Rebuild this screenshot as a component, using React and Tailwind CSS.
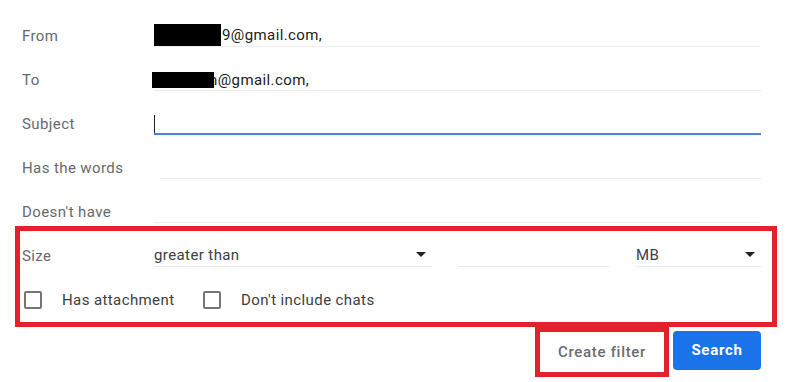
export default function App() {
  return (
    <div className="h-[382px] w-[788px] overflow-hidden bg-white pl-[22px] pr-[27px] pt-[13px] font-['Roboto',sans-serif] text-[15px] tracking-[0.4px]">
      <FieldRow label="From">
        <span className="mr-[1px] inline-block h-[22px] w-[67px] bg-black align-middle" />
        <span className="align-middle">9@gmail.com,</span>
      </FieldRow>
      <FieldRow label="To">
        <span className="relative z-10 -ml-[2px] inline-block h-[16px] w-[62px] bg-black align-middle" />
        <span className="-ml-[5px] align-middle">n@gmail.com,</span>
      </FieldRow>
      <FieldRow label="Subject" focused>
        <span className="inline-block h-[18px] w-px bg-[#202124] align-middle" />
      </FieldRow>
      <FieldRow label="Has the words" inset />
      <FieldRow label="Doesn't have" />

      <div className="-ml-[7px] -mr-[16px] -mt-[7px] border-[5px] border-[#e3212a] pb-[1px] pl-[2px] pr-[11px] pt-[2px]">
        <div className="flex h-[44px] items-center">
          <div className="w-[132px] pt-[2px] text-[#666a6e]">Size</div>
          <SelectBox value="greater than" className="w-[278px]" />
          <div className="ml-[26px] h-[24px] w-[151px] border-b border-[#e8eaed]" />
          <SelectBox value="MB" className="ml-[27px] flex-1" />
        </div>
        <div className="flex h-[44px] items-center pt-[1px] text-[#3c4043]">
          <Checkbox />
          <span className="ml-[20px] w-[139px] pt-[1px]">Has attachment</span>
          <Checkbox />
          <span className="ml-[20px] pt-[1px]">Don't include chats</span>
        </div>
      </div>

      <div className="flex justify-end tracking-[0.7px]">
        <div className="flex h-[50px] w-[134px] items-center justify-center border-[5px] border-[#e3212a] font-medium text-[#6a6d71]">
          Create filter
        </div>
        <button
          type="button"
          className="ml-[4px] mt-[4px] h-[39px] w-[88px] rounded-[4px] bg-[#1a73e8] font-bold text-white"
        >
          Search
        </button>
      </div>
    </div>
  );
}

function FieldRow({ label, focused, inset, children }) {
  const lineStyle = focused
    ? "border-b-2 border-[#4a86d8]"
    : "border-b border-[#eceef0]";

  return (
    <div className="flex h-[44px] items-center">
      <div className="w-[132px] pt-[2px] text-[#666a6e]">{label}</div>
      <div
        className={[
          "flex h-[24px] flex-1 items-center text-[#202124]",
          inset ? "ml-[6px]" : "",
          lineStyle,
        ].join(" ")}
      >
        <div className="whitespace-nowrap pt-[1px] leading-[20px]">{children}</div>
      </div>
    </div>
  );
}

function SelectBox({ value, className }) {
  return (
    <div
      className={[
        "flex h-[24px] items-center justify-between border-b border-[#e8eaed] text-[#3c4043]",
        className,
      ].join(" ")}
    >
      <span className="pt-[2px]">{value}</span>
      <svg width="10" height="5" viewBox="0 0 10 5" className="mr-[6px]">
        <path d="M0 0h10L5 5z" fill="#202124" />
      </svg>
    </div>
  );
}

function Checkbox() {
  return (
    <span className="ml-[2px] inline-block h-[18px] w-[18px] rounded-[2px] border-2 border-[#757575]" />
  );
}
